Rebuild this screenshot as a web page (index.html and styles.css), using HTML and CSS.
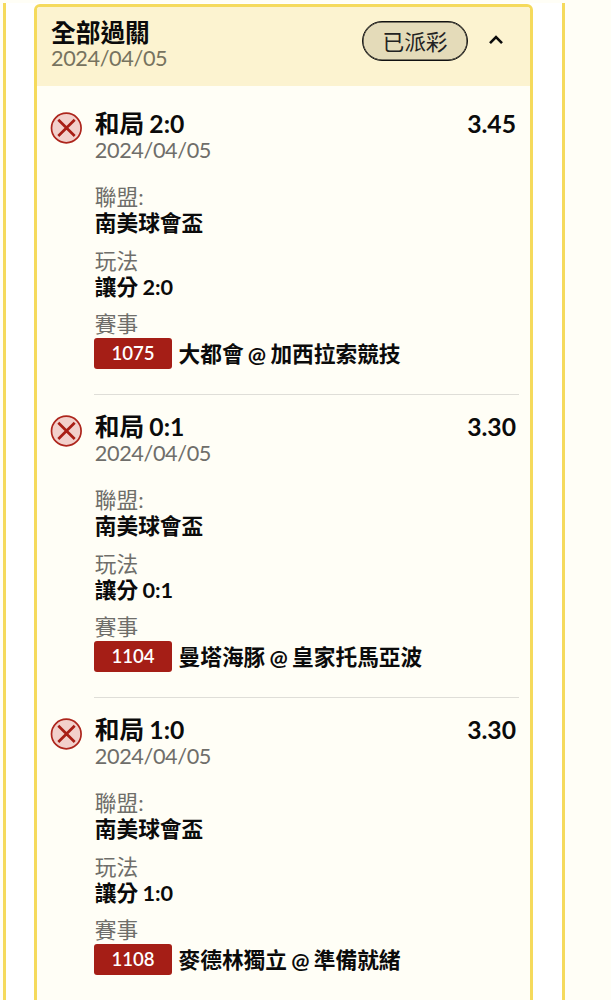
FILE: index.html
```
<!DOCTYPE html>
<html lang="zh-Hant">
<head>
<meta charset="utf-8">
<title>全部過關</title>
<link rel="stylesheet" href="styles.css">
</head>
<body>
<main class="column">
  <section class="card">
    <header class="card-header">
      <div>
        <h1 class="title">全部過關</h1>
        <div class="date">2024/04/05</div>
      </div>
      <div class="actions">
        <span class="status">已派彩</span>
        <svg class="chevron" viewBox="0 0 16 12"><path d="M2 9.2 8 3.2l6 6"/></svg>
      </div>
    </header>
    <article class="bet">
      <svg class="lost" viewBox="0 0 32 32"><circle cx="16.3" cy="16" r="14.8"/><path d="M8.3 7.7 24.7 24M24.7 7.7 8.3 24"/></svg>
      <div class="body">
        <div class="row"><h2 class="title">和局 2:0</h2><span class="odds">3.45</span></div>
        <div class="date">2024/04/05</div>
        <dl class="details">
          <div><dt>聯盟:</dt><dd>南美球會盃</dd></div>
          <div><dt>玩法</dt><dd>讓分 2:0</dd></div>
          <div><dt>賽事</dt><dd class="match"><span class="code">1075</span><span class="teams">大都會 @ 加西拉索競技</span></dd></div>
        </dl>
      </div>
    </article>
    <article class="bet">
      <svg class="lost" viewBox="0 0 32 32"><circle cx="16.3" cy="16" r="14.8"/><path d="M8.3 7.7 24.7 24M24.7 7.7 8.3 24"/></svg>
      <div class="body">
        <div class="row"><h2 class="title">和局 0:1</h2><span class="odds">3.30</span></div>
        <div class="date">2024/04/05</div>
        <dl class="details">
          <div><dt>聯盟:</dt><dd>南美球會盃</dd></div>
          <div><dt>玩法</dt><dd>讓分 0:1</dd></div>
          <div><dt>賽事</dt><dd class="match"><span class="code">1104</span><span class="teams">曼塔海豚 @ 皇家托馬亞波</span></dd></div>
        </dl>
      </div>
    </article>
    <article class="bet">
      <svg class="lost" viewBox="0 0 32 32"><circle cx="16.3" cy="16" r="14.8"/><path d="M8.3 7.7 24.7 24M24.7 7.7 8.3 24"/></svg>
      <div class="body">
        <div class="row"><h2 class="title">和局 1:0</h2><span class="odds">3.30</span></div>
        <div class="date">2024/04/05</div>
        <dl class="details">
          <div><dt>聯盟:</dt><dd>南美球會盃</dd></div>
          <div><dt>玩法</dt><dd>讓分 1:0</dd></div>
          <div><dt>賽事</dt><dd class="match"><span class="code">1108</span><span class="teams">麥德林獨立 @ 準備就緒</span></dd></div>
        </dl>
      </div>
    </article>
  </section>
</main>
</body>
</html>
```
FILE: styles.css
```
* { box-sizing: border-box; }
html { height: 100%; overflow: hidden; background: #fffef6; }
body {
  height: 100%;
  margin: 0;
  padding-top: 3px;
  overflow: hidden;
  font-family: Lato, "Noto Sans CJK TC", sans-serif;
  font-size: 21.7px;
  line-height: 26px;
  color: #0b0b0b;
}
h1, h2, dl, dd { margin: 0; }
.column {
  width: 562px;
  height: 1020px;
  margin-left: 3px;
  padding: 1px 29px 0 28px;
  background: #fff;
  border: solid #f5da5c;
  border-width: 0 3px;
}
.card {
  width: 499px;
  height: 1040px;
  background: #fffef6;
  border: 3px solid #f5da5c;
  border-radius: 6px;
  overflow: hidden;
}
.card-header {
  display: flex;
  justify-content: space-between;
  height: 79px;
  padding: 13px 26px 0 14px;
  background: #fcf3d0;
}
.title { font-size: 24.7px; font-weight: 700; line-height: 26px; white-space: nowrap; word-spacing: -0.8px; }
.card-header .title { line-height: 25px; }
.date { color: #6f6e6a; white-space: nowrap; letter-spacing: -0.4px; }
.card-header .date { color: #77735f; }
.actions { display: flex; align-items: flex-start; gap: 20px; }
.status {
  width: 106px;
  height: 40px;
  margin-top: 1px;
  border: 1px solid #111;
  box-shadow: inset 0 0 0 0.5px #111;
  border-radius: 20px;
  background: #e4dbb9;
  line-height: 40px;
  text-align: center;
  color: #222;
}
.chevron { width: 16px; height: 12px; margin-top: 14px; }
.chevron path { fill: none; stroke: #0b0b0b; stroke-width: 2.6; }
.bet {
  display: flex;
  gap: 12px;
  height: 303.3px;
  padding: 19px 11px 0 13px;
}
.bet:first-of-type { height: 309px; padding-top: 25px; }
.lost { flex: none; width: 32px; height: 32px; margin-top: 1px; }
.lost circle { fill: #f2d0cb; stroke: #ad251c; stroke-width: 1.7; }
.lost path { stroke: #a81e15; stroke-width: 2.7; }
.body { flex: 1; border-bottom: 1.5px solid #dfded8; }
.bet:last-of-type .body { border-bottom: 0; }
.row { display: flex; justify-content: space-between; padding-right: 3px; }
.body .title, .body .date, dt, dd:not(.match) { padding-left: 0.8px; }
.odds { font-size: 24.7px; font-weight: 700; }
.details { display: grid; gap: 11px; padding-top: 21px; }
dt { color: #6f6e6a; line-height: 26px; }
dd { font-weight: 700; line-height: 26.5px; white-space: nowrap; word-spacing: -1px; }
.match { display: flex; align-items: center; gap: 6.5px; height: 31px; margin-top: 1px; line-height: 31px; }
.teams { padding-top: 2px; }
.code {
  width: 78px;
  height: 31px;
  background: #a51e16;
  border-radius: 3px;
  color: #fff;
  font-size: 18.6px;
  font-weight: 600;
  text-align: center;
}
```
